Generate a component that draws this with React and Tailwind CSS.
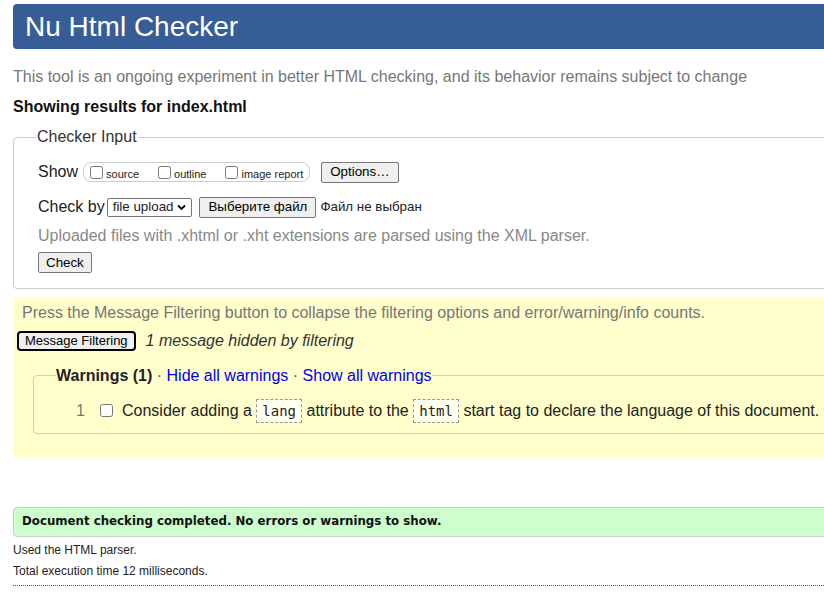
import { useState } from "react";

const sans = { fontFamily: '"Liberation Sans", Arial, sans-serif' };

function Btn({ children, className = "" }) {
  return (
    <button
      type="button"
      className={
        "bg-[#efefef] border border-[#767676] rounded-[2px] text-black leading-none " +
        className
      }
    >
      {children}
    </button>
  );
}

function Code({ children }) {
  return (
    <code
      className="inline-block border border-dashed border-[#999] bg-[#ffffee] px-[5px] text-[14px] leading-[22px] text-[#222] align-middle"
      style={{ fontFamily: '"DejaVu Sans Mono", "Liberation Mono", monospace' }}
    >
      {children}
    </code>
  );
}

export default function App() {
  const [show, setShow] = useState({ source: false, outline: false, image: false });

  return (
    <div className="overflow-hidden w-[824px] bg-white text-[#222]" style={sans}>
      <div className="w-[860px] pl-[13px] pt-[4px]">
        {/* header */}
        <div className="h-[45px] bg-[#365d95] rounded-l-[4px] flex items-center pl-[12px]">
          <h1 className="text-white text-[28px] leading-none">Nu Html Checker</h1>
        </div>

        <p className="mt-[18px] text-[16px] leading-[20px] text-[#777]">
          This tool is an ongoing experiment in better HTML checking, and its behavior remains subject to change
        </p>
        <p className="mt-[10px] text-[16px] leading-[20px] font-bold text-[#111]">
          Showing results for index.html
        </p>

        {/* checker input */}
        <fieldset className="mt-[8px] border border-[#ccc] rounded-[4px] pl-[24px] pr-2 pb-[14px] pt-[2px]">
          <legend className="text-[16px] text-[#333] px-[1px] ml-[-2px]">Checker Input</legend>

          <div className="flex items-center h-[24px] mt-[9px]">
            <span className="text-[16px] mr-[5px]">Show</span>
            <div className="flex items-center h-[20px] border border-[#ccc] rounded-[8px] pl-[6px] pr-[6px] text-[11px] leading-none">
              <label className="flex items-center mr-[19px]">
                <input
                  type="checkbox"
                  checked={show.source}
                  onChange={() => setShow({ ...show, source: !show.source })}
                  className="m-0 mr-[3px] w-[13px] h-[13px]"
                />
                <span className="translate-y-[2px]">source</span>
              </label>
              <label className="flex items-center mr-[19px]">
                <input
                  type="checkbox"
                  checked={show.outline}
                  onChange={() => setShow({ ...show, outline: !show.outline })}
                  className="m-0 mr-[3px] w-[13px] h-[13px]"
                />
                <span className="translate-y-[2px]">outline</span>
              </label>
              <label className="flex items-center">
                <input
                  type="checkbox"
                  checked={show.image}
                  onChange={() => setShow({ ...show, image: !show.image })}
                  className="m-0 mr-[3px] w-[13px] h-[13px]"
                />
                <span className="translate-y-[2px]">image report</span>
              </label>
            </div>
            <Btn className="ml-[11px] h-[21px] px-[8px] text-[13.33px]">Options…</Btn>
          </div>

          <div className="flex items-center h-[24px] mt-[11px]">
            <span className="text-[16px] mr-[2px]">Check by</span>
            <div className="flex items-center h-[19px] border border-[#767676] rounded-[2px] pl-[5px] pr-[5px] text-[13.33px] leading-none">
              file upload
              <svg width="9" height="7" viewBox="0 0 9 7" className="ml-[4px]">
                <path d="M1 1.5 L4.5 5 L8 1.5" fill="none" stroke="#000" strokeWidth="1.8" />
              </svg>
            </div>
            <Btn className="ml-[7px] h-[21px] px-[8px] text-[13.33px]">Выберите файл</Btn>
            <span className="ml-[4px] text-[13.33px]">Файл не выбран</span>
          </div>

          <p className="mt-[7px] text-[16px] leading-[20px] text-[#888]">
            Uploaded files with .xhtml or .xht extensions are parsed using the XML parser.
          </p>

          <Btn className="mt-[6px] h-[21px] px-[7px] text-[13.33px]">Check</Btn>
        </fieldset>

        {/* filtering */}
        <div className="mt-[8px] bg-[#ffffcc] h-[160px] pt-[6px]">
          <p className="pl-[9px] text-[16px] leading-[20px] text-[#777]">
            Press the Message Filtering button to collapse the filtering options and error/warning/info counts.
          </p>
          <div className="flex items-center mt-[6px] pl-[4px]">
            <button
              type="button"
              className="bg-[#efefef] border-2 border-black rounded-[4px] h-[20px] px-[6px] text-[13px] leading-none text-black"
            >
              Message Filtering
            </button>
            <span className="ml-[10px] italic text-[16px] text-[#333]">1 message hidden by filtering</span>
          </div>

          <fieldset className="mt-[13px] ml-[20px] border border-[#ccc] rounded-l-[4px] pl-[22px] pb-[10px]">
            <legend className="text-[16px] leading-[20px] px-0">
              <span className="font-bold text-[#222]">Warnings (1)</span>
              <span className="text-[#555]"> · </span>
              <a className="text-[#0000ee]">Hide all warnings</a>
              <span className="text-[#555]"> · </span>
              <a className="text-[#0000ee]">Show all warnings</a>
            </legend>
            <div className="flex items-center text-[16px] mt-[13px]">
              <span className="w-[18px] text-right text-[#777] mr-[15px] ml-[11px]">1</span>
              <input type="checkbox" className="m-0 w-[13px] h-[13px] mr-[9px]" />
              <span className="text-[#222]">Consider adding a&nbsp;</span>
              <Code>lang</Code>
              <span className="text-[#222]">&nbsp;attribute to the&nbsp;</span>
              <Code>html</Code>
              <span className="text-[#222]">&nbsp;start tag to declare the language of this document.</span>
            </div>
          </fieldset>
        </div>

        {/* result */}
        <div
          className="mt-[50px] h-[30px] bg-[#ccffcc] border border-[#ccc] rounded-l-[4px] flex items-center pl-[8px] text-[11.8px] font-bold text-[#111]"
          style={{ fontFamily: '"DejaVu Sans", Verdana, sans-serif' }}
        >
          Document checking completed. No errors or warnings to show.
        </div>
        <p className="mt-[6px] text-[12px] leading-[14px] text-[#222]">Used the HTML parser.</p>
        <p className="mt-[7px] text-[12px] leading-[14px] text-[#222]">Total execution time 12 milliseconds.</p>
        <div className="mt-[7px] border-t border-dotted border-[#555]" />
        <div className="h-[20px]" />
      </div>
    </div>
  );
}
